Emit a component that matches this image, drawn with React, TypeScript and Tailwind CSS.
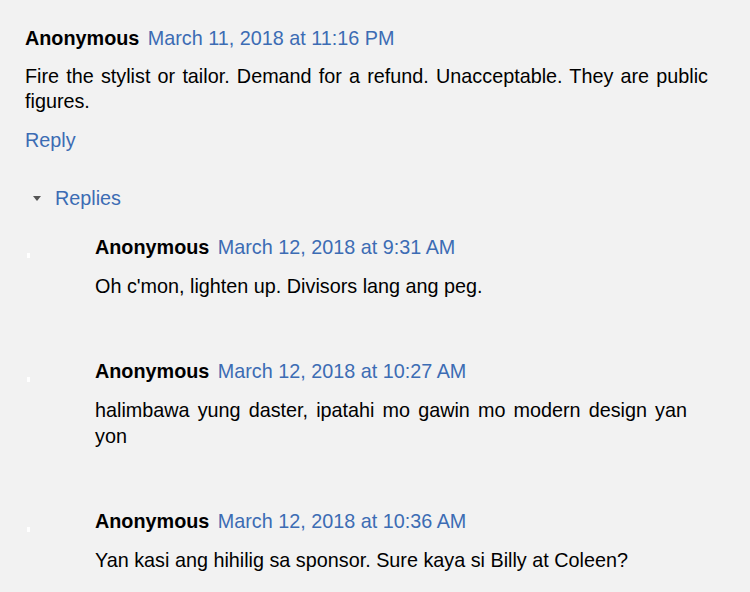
const replies = [
  {
    author: 'Anonymous',
    date: 'March 12, 2018 at 9:31 AM',
    body: "Oh c'mon, lighten up. Divisors lang ang peg.",
  },
  {
    author: 'Anonymous',
    date: 'March 12, 2018 at 10:27 AM',
    body: 'halimbawa yung daster, ipatahi mo gawin mo modern design yan yon',
  },
  {
    author: 'Anonymous',
    date: 'March 12, 2018 at 10:36 AM',
    body: 'Yan kasi ang hihilig sa sponsor. Sure kaya si Billy at Coleen?',
  },
];

function Header({ author, date }: { author: string; date: string }) {
  return (
    <div className="leading-[25px]">
      <span className="font-bold text-black">{author}</span>{' '}
      <a className="ml-[3px] text-[#3c6cb4]">{date}</a>
    </div>
  );
}

export default function App() {
  return (
    <div
      className="min-h-[592px] bg-[#f2f2f2] pl-[25px] pt-[26px] text-[19.8px] text-black"
      style={{ fontFamily: '"Liberation Sans", Arial, sans-serif' }}
    >
      <div className="w-[683px]">
        <Header author="Anonymous" date="March 11, 2018 at 11:16 PM" />
        <p className="mt-[13px] text-justify leading-[25px]">
          Fire the stylist or tailor. Demand for a refund. Unacceptable. They are public figures.
        </p>
        <div className="mt-[14px] leading-[25px] text-[#3c6cb4]">Reply</div>
      </div>

      <div className="mt-[33px] flex items-center leading-[25px]">
        <span className="ml-[8px] mr-[14px] h-0 w-0 border-x-[4px] border-t-[5px] border-x-transparent border-t-[#555]" />
        <span className="text-[#3c6cb4]">Replies</span>
      </div>

      <div className="mt-[24px] flex flex-col gap-[60px]">
        {replies.map((r) => (
          <div key={r.date} className="flex">
            <div className="w-[70px] shrink-0 pt-[18px]">
              <div className="ml-[2px] h-[5px] w-[3px] bg-white" />
            </div>
            <div className="w-[592px]">
              <Header author={r.author} date={r.date} />
              <p className="mt-[13px] text-justify leading-[26px]">{r.body}</p>
            </div>
          </div>
        ))}
      </div>
    </div>
  );
}
